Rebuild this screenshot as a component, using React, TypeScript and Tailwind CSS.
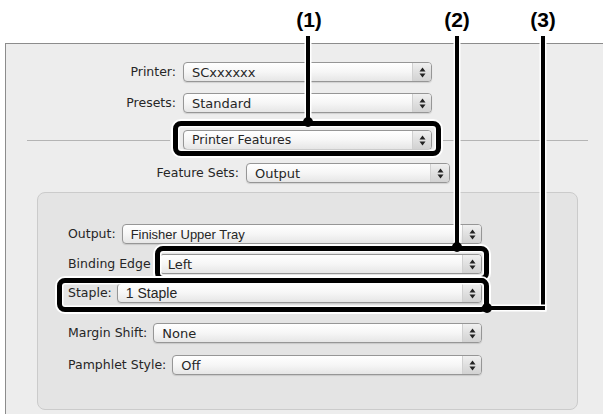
import React from "react";

const ui = "font-['DejaVu_Sans',sans-serif] text-[12.5px] text-[#262626]";

function Arrows() {
  return (
    <svg width="7" height="11" viewBox="0 0 7 11" className="block">
      <path d="M3.5 0.5 L6.5 4.5 L0.5 4.5 Z" fill="#222" />
      <path d="M3.5 10.5 L6.5 6.5 L0.5 6.5 Z" fill="#222" />
    </svg>
  );
}

function Popup({ value, className = "", valueClass = "" }: { value: string; className?: string; valueClass?: string }) {
  return (
    <div
      className={`flex h-[20px] rounded-[4px] border border-[#969696] bg-gradient-to-b from-white via-[#f6f6f6] to-[#e6e6e6] shadow-[0_1px_1px_rgba(0,0,0,0.12)] ${className}`}
    >
      <div className={`flex flex-1 items-center pl-[8px] leading-none ${valueClass}`}>{value}</div>
      <div className="flex w-[19px] items-center justify-center rounded-r-[3px] border-l border-[#d0d0d0] bg-gradient-to-b from-[#f0f0f0] via-[#e0e0e0] to-[#d2d2d2]">
        <Arrows />
      </div>
    </div>
  );
}

function Callout({ label, x }: { label: string; x: number }) {
  return (
    <div
      className="absolute top-[9px] w-[40px] text-center font-['Liberation_Sans',sans-serif] text-[21px] font-bold leading-none text-black"
      style={{ left: x - 20 }}
    >
      {label}
    </div>
  );
}

export default function App() {
  return (
    <div className={`relative h-[414px] w-[603px] overflow-hidden bg-white ${ui}`}>
      <div className="h-[43px]" />
      <div className="ml-[5px] h-[371px] border-l border-t border-[#8c8c8c] bg-[#ededed]">
        {/* top popups */}
        <div className="mt-[18px] flex items-center">
          <div className="w-[170px] text-right">Printer:</div>
          <Popup value="SCxxxxxx" className="ml-[7px] w-[249px]" valueClass="text-[13px]" />
        </div>
        <div className="mt-[11px] flex items-center">
          <div className="w-[170px] text-right">Presets:</div>
          <Popup value="Standard" className="ml-[7px] w-[249px]" valueClass="text-[13px]" />
        </div>
        <div className="mt-[17px] flex items-center">
          <div className="ml-[21px] h-px w-[143px] bg-[#b4b4b4]" />
          <Popup value="Printer Features" className="ml-[13px] w-[249px]" />
          <div className="ml-[8px] h-px w-[148px] bg-[#b4b4b4]" />
        </div>
        <div className="mt-[13px] flex items-center">
          <div className="w-[233px] text-right">Feature Sets:</div>
          <Popup value="Output" className="ml-[7px] w-[204px]" valueClass="text-[13px]" />
        </div>

        {/* inner panel */}
        <div className="ml-[31px] mt-[9px] h-[218px] w-[541px] rounded-[8px] border border-[#cbcbcb] bg-[#e4e4e4] pl-[30px] pt-[31px]">
          <div className="flex w-[414px] items-center">
            <div>Output:</div>
            <Popup value="Finisher Upper Tray" className="ml-[6px] flex-1" valueClass="font-['Liberation_Sans',sans-serif] text-[13px]" />
          </div>
          <div className="mt-[10px] flex w-[414px] items-center">
            <div>Binding Edge</div>
            <Popup value="Left" className="ml-[8px] flex-1" valueClass="text-[13px]" />
          </div>
          <div className="mt-[9px] flex w-[414px] items-center">
            <div>Staple:</div>
            <Popup value="1 Staple" className="ml-[5px] flex-1" valueClass="font-['Liberation_Sans',sans-serif] text-[14px]" />
          </div>
          <div className="mt-[20px] flex w-[414px] items-center">
            <div>Margin Shift:</div>
            <Popup value="None" className="ml-[6px] flex-1" valueClass="text-[13px]" />
          </div>
          <div className="mt-[12px] flex w-[414px] items-center">
            <div>Pamphlet Style:</div>
            <Popup value="Off" className="ml-[6px] flex-1" valueClass="text-[13px]" />
          </div>
        </div>
      </div>

      {/* callouts */}
      <Callout label="(1)" x={309} />
      <Callout label="(2)" x={457} />
      <Callout label="(3)" x={543} />

      {/* (1) */}
      <div className="absolute left-[306px] top-[36px] h-[88px] w-[4px] bg-black shadow-[0_0_0_1.5px_white]" />
      <div className="absolute left-[173px] top-[121px] h-[35px] w-[268px] rounded-[8px] border-[5px] border-black shadow-[0_0_0_2px_white,inset_0_0_0_1.5px_white]" />
      <div className="absolute left-[303px] top-[117px] h-[10px] w-[10px] rounded-full bg-black" />

      {/* (2) */}
      <div className="absolute left-[455px] top-[36px] h-[212px] w-[4px] bg-black shadow-[0_0_0_1.5px_white]" />
      <div className="absolute left-[155px] top-[246px] h-[35px] w-[334px] rounded-[8px] border-[5px] border-black shadow-[0_0_0_2px_white,inset_0_0_0_1.5px_white]" />
      <div className="absolute left-[452px] top-[242px] h-[10px] w-[10px] rounded-full bg-black" />

      {/* (3) */}
      <div className="absolute left-[541px] top-[36px] h-[274px] w-[4px] bg-black shadow-[0_0_0_1.5px_white]" />
      <div className="absolute left-[487px] top-[306px] h-[4px] w-[58px] bg-black shadow-[0_0_0_1.5px_white]" />
      <div className="absolute left-[57px] top-[278px] h-[34px] w-[432px] rounded-[8px] border-[5px] border-black shadow-[0_0_0_2px_white,inset_0_0_0_1.5px_white]" />
      <div className="absolute left-[482px] top-[303px] h-[10px] w-[10px] rounded-full bg-black" />
    </div>
  );
}
